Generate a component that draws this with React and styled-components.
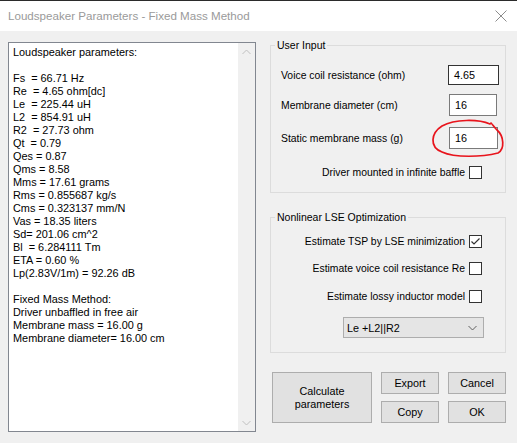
import React from "react";
import styled, { createGlobalStyle } from "styled-components";

const Global = createGlobalStyle`
  html, body { margin: 0; padding: 0; background: #f0f0f0; }
  body { font-family: "Liberation Sans", Arial, sans-serif; }
  * { box-sizing: border-box; }
`;

const Window = styled.div`
  position: relative;
  width: 517px;
  height: 443px;
  background: #f0f0f0;
  overflow: hidden;
  font-family: "Liberation Sans", Arial, sans-serif;
  font-size: 11px;
  color: #000;
`;

const TitleBar = styled.div`
  height: 31px;
  border-top: 1px solid #2b2b2b;
  background: #fff;
  display: flex;
  align-items: center;
  justify-content: space-between;
  padding: 0 10px 0 8px;
`;

const Title = styled.div`
  font-size: 11.6px;
  color: #9a9a9a;
  line-height: 30px;
`;

const Body = styled.div`
  display: flex;
  align-items: flex-start;
  padding: 7px 0 0 8px;
`;

const TextBox = styled.div`
  margin-top: 4px;
  width: 248px;
  height: 390px;
  border: 1px solid #828790;
  background: #fff;
  display: flex;
`;

const TextContent = styled.div`
  flex: 1;
  padding: 3px 4px;
  line-height: 13px;
  font-size: 10.9px;
  white-space: pre;
`;

const Scrollbar = styled.div`
  width: 17px;
  background: #f0f0f0;
  display: flex;
  flex-direction: column;
  justify-content: space-between;
`;

const ScrollArrow = styled.div`
  height: 17px;
  display: flex;
  align-items: center;
  justify-content: center;
`;

const RightColumn = styled.div`
  margin-left: 14px;
  width: 236px;
  display: flex;
  flex-direction: column;
  font-size: 10.4px;
`;

const Group = styled.fieldset`
  margin: ${(p) => p.$mt || 0}px 0 0 0;
  padding: 0;
  border: 1px solid #dcdcdc;
  min-width: 0;
`;

const Legend = styled.legend`
  margin-left: 4px;
  padding: 0 2px;
  line-height: 14px;
  font-size: 10.5px;
`;

const GroupContent = styled.div`
  display: flex;
  flex-direction: column;
  padding: ${(p) => p.$pad};
`;

const FieldRow = styled.div`
  display: flex;
  align-items: center;
  justify-content: space-between;
  margin-top: ${(p) => p.$mt}px;
  height: ${(p) => p.$h}px;
`;

const Input = styled.div`
  width: ${(p) => p.$w}px;
  height: ${(p) => p.$h}px;
  border: 1px solid ${(p) => (p.$focus ? "#333" : "#7a7a7a")};
  background: #fff;
  display: flex;
  align-items: center;
  padding-left: 5px;
  font-size: 10.8px;
  margin-right: ${(p) => p.$mr || 0}px;
`;

const CheckRow = styled.div`
  display: flex;
  align-items: center;
  justify-content: flex-end;
  gap: 4px;
  margin-top: ${(p) => p.$mt}px;
  height: 13px;
  padding-right: ${(p) => p.$pr || 0}px;
`;

const Box = styled.div`
  width: 13px;
  height: 13px;
  border: 1px solid #333;
  background: #fff;
  display: flex;
  align-items: center;
  justify-content: center;
`;

const Select = styled.div`
  align-self: flex-end;
  margin: 14px -2px 0 0;
  width: 141px;
  height: 21px;
  border: 1px solid #adadad;
  background: #e5e5e5;
  display: flex;
  align-items: center;
  justify-content: space-between;
  padding: 0 6px 0 3px;
  font-size: 10.8px;
`;

const Buttons = styled.div`
  display: grid;
  grid-template-columns: 100px 58px 58px;
  grid-template-rows: 22px 22px;
  column-gap: 9px;
  row-gap: 7px;
  margin: 19px 0 0 2px;
  font-size: 10.8px;
`;

const Button = styled.div`
  grid-row: ${(p) => (p.$tall ? "1 / span 2" : "auto")};
  border: 1px solid #adadad;
  background: #e1e1e1;
  display: flex;
  align-items: center;
  justify-content: center;
  text-align: center;
  line-height: 13px;
`;

const Overlay = styled.svg`
  position: absolute;
  left: 0;
  top: 0;
  pointer-events: none;
`;

const lines = [
  "Loudspeaker parameters:",
  "",
  "Fs  = 66.71 Hz",
  "Re  = 4.65 ohm[dc]",
  "Le  = 225.44 uH",
  "L2  = 854.91 uH",
  "R2  = 27.73 ohm",
  "Qt  = 0.79",
  "Qes = 0.87",
  "Qms = 8.58",
  "Mms = 17.61 grams",
  "Rms = 0.855687 kg/s",
  "Cms = 0.323137 mm/N",
  "Vas = 18.35 liters",
  "Sd= 201.06 cm^2",
  "Bl  = 6.284111 Tm",
  "ETA = 0.60 %",
  "Lp(2.83V/1m) = 92.26 dB",
  "",
  "Fixed Mass Method:",
  "Driver unbaffled in free air",
  "Membrane mass = 16.00 g",
  "Membrane diameter= 16.00 cm",
];

const Chevron = ({ up, color = "#c0c0c0" }) => (
  <svg width="9" height="6" viewBox="0 0 9 6">
    <polyline
      points={up ? "0.5,5 4.5,1 8.5,5" : "0.5,1 4.5,5 8.5,1"}
      fill="none"
      stroke={color}
      strokeWidth="1"
    />
  </svg>
);

const CloseIcon = () => (
  <svg width="12" height="12" viewBox="0 0 12 12">
    <path d="M0.5 0.5 L11.5 11.5 M11.5 0.5 L0.5 11.5" stroke="#8c8c8c" strokeWidth="1" fill="none" />
  </svg>
);

const Check = () => (
  <svg width="11" height="11" viewBox="0 0 11 11">
    <polyline points="1.5,5.5 4,8 9.5,2.5" fill="none" stroke="#333" strokeWidth="1.2" />
  </svg>
);

const CheckItem = ({ label, checked, mt, pr }) => (
  <CheckRow $mt={mt} $pr={pr}>
    <span>{label}</span>
    <Box>{checked && <Check />}</Box>
  </CheckRow>
);

export default function App() {
  return (
    <Window>
      <Global />
      <TitleBar>
        <Title>Loudspeaker Parameters - Fixed Mass Method</Title>
        <CloseIcon />
      </TitleBar>
      <Body>
        <TextBox>
          <TextContent>{lines.join("\n")}</TextContent>
          <Scrollbar>
            <ScrollArrow>
              <Chevron up />
            </ScrollArrow>
            <ScrollArrow>
              <Chevron />
            </ScrollArrow>
          </Scrollbar>
        </TextBox>
        <RightColumn>
          <Group>
            <Legend>User Input</Legend>
            <GroupContent $pad="0 0 13px 10px">
              <FieldRow $mt={13} $h={20}>
                <span>Voice coil resistance (ohm)</span>
                <Input $w={51} $h={20} $focus $mr={6}>4.65</Input>
              </FieldRow>
              <FieldRow $mt={9} $h={22}>
                <span>Membrane diameter (cm)</span>
                <Input $w={48} $h={22} $mr={8}>16</Input>
              </FieldRow>
              <FieldRow $mt={11} $h={22}>
                <span>Static membrane mass (g)</span>
                <Input $w={49} $h={22} $mr={7}>16</Input>
              </FieldRow>
              <CheckItem label="Driver mounted in infinite baffle" mt={17} pr={23} />
            </GroupContent>
          </Group>
          <Group $mt={17}>
            <Legend>Nonlinear LSE Optimization</Legend>
            <GroupContent $pad="0 23px 14px 10px">
              <CheckItem label="Estimate TSP by LSE minimization" checked mt={11} />
              <CheckItem label="Estimate voice coil resistance Re" mt={14} />
              <CheckItem label="Estimate lossy inductor model" mt={15} />
              <Select>
                <span>Le +L2||R2</span>
                <Chevron color="#606060" />
              </Select>
            </GroupContent>
          </Group>
          <Buttons>
            <Button $tall>
              Calculate
              <br />
              parameters
            </Button>
            <Button>Export</Button>
            <Button>Cancel</Button>
            <Button>Copy</Button>
            <Button>OK</Button>
          </Buttons>
        </RightColumn>
      </Body>
      <Overlay width="517" height="443" viewBox="0 0 517 443">
        <path
          d="M490 124 C478 119, 455 119, 442 126 C431 133, 429 147, 442 152 C455 158, 482 157, 498 153 C505 149, 504 136, 497 130 C494 127, 493 125, 491 123"
          fill="none"
          stroke="#e8141c"
          strokeWidth="1.7"
          strokeLinecap="round"
        />
      </Overlay>
    </Window>
  );
}
